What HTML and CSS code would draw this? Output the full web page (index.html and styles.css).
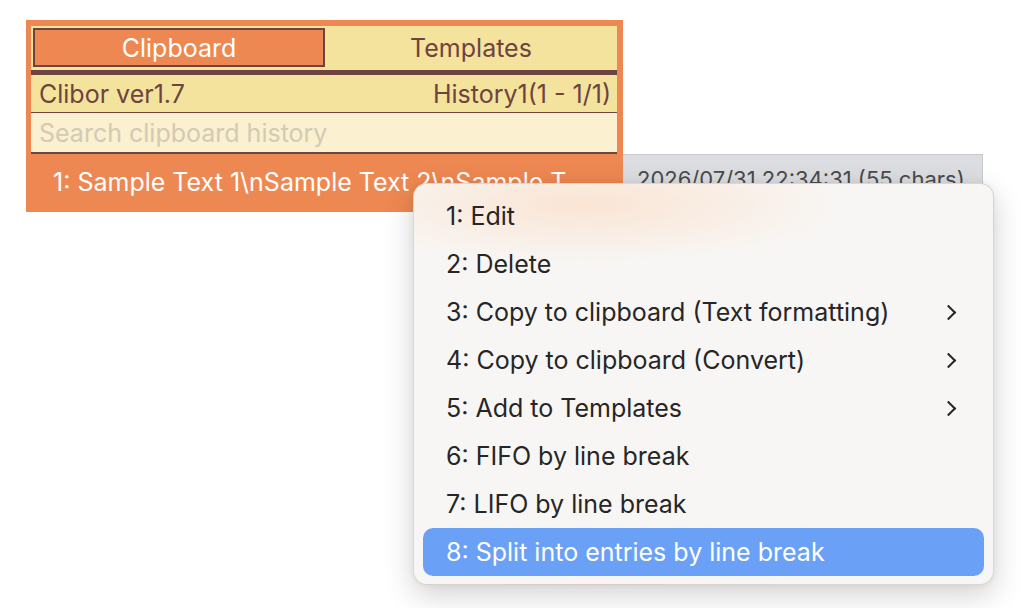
FILE: index.html
```html
<!DOCTYPE html>
<html lang="en">
<head>
  <meta charset="UTF-8">
  <meta name="viewport" content="width=device-width, initial-scale=1.0">
  <title>Clibor</title>
  <link rel="stylesheet" href="styles.css">
</head>
<body>
  <div class="stage">
    <div class="panel">
      <div class="tabs">
        <div class="tab active">Clipboard</div>
        <div class="tab">Templates</div>
      </div>
      <div class="info-row">
        <span>Clibor ver1.7</span>
        <span>History1(1 - 1/1)</span>
      </div>
      <div class="search-row">
        <input class="search" type="text" placeholder="Search clipboard history">
      </div>
      <div class="list">
        <div class="entry">1: Sample Text 1\nSample Text 2\nSample T</div>
      </div>
    </div>

    <!-- detalle de la entrada -->
    <div class="detail">2026/07/31 22:34:31 (55 chars)</div>

    <!-- menu contextual -->
    <div class="menu">
      <div class="menu-item">1: Edit</div>
      <div class="menu-item">2: Delete</div>
      <div class="menu-item has-sub">3: Copy to clipboard (Text formatting)</div>
      <div class="menu-item has-sub">4: Copy to clipboard (Convert)</div>
      <div class="menu-item has-sub">5: Add to Templates</div>
      <div class="menu-item">6: FIFO by line break</div>
      <div class="menu-item">7: LIFO by line break</div>
      <div class="menu-item selected">8: Split into entries by line break</div>
    </div>
  </div>
</body>
</html>
```

FILE: styles.css
```css
* {
  margin: 0;
  padding: 0;
  box-sizing: border-box;
}

body {
  font-family: Inter, "Noto Sans", sans-serif;
  background-color: #fff;
  width: 1024px;
  height: 608px;
  overflow: hidden;
}

.stage {
  position: relative;
  padding: 20px 0 0 26px;
}

.panel {
  width: 597px;
  background-color: #ee8852;
  padding: 6px 6px 0 5px;
}

.tabs {
  display: flex;
  background-color: #f4e39c;
  height: 44px;
  padding: 2px 0 3px 2px;
}

.tab {
  flex: 1;
  display: flex;
  justify-content: center;
  align-items: center;
  font-size: 25px;
  color: #6e4340;
}

.tab.active {
  flex: 0 0 292px;
  background-color: #ee8852;
  border: 2px solid #6e4340;
  color: #fff;
}

.info-row {
  display: flex;
  justify-content: space-between;
  align-items: center;
  height: 43px;
  padding: 0 6px 0 8px;
  background-color: #f4e39c;
  border-top: 5px solid #6e4340;
  border-bottom: 1.5px solid #6e4340;
  font-size: 25px;
  color: #6e4340;
}

.search-row {
  height: 41px;
  background-color: #fbf0cf;
  border-bottom: 2px solid #6e4340;
}

.search {
  width: 100%;
  height: 100%;
  border: none;
  outline: none;
  background: transparent;
  padding: 0 8px;
  font-family: inherit;
  font-size: 25px;
  color: #6e4340;
}

.search::placeholder {
  color: #d3cab5;
}

.list {
  height: 58px;
}

.entry {
  padding: 13px 0 0 22px;
  white-space: nowrap;
  font-size: 25px;
  color: #fff;
}

.detail {
  position: absolute;
  left: 623px;
  top: 154px;
  width: 360px;
  height: 70px;
  padding: 11px 0 0 14px;
  background-color: #dcdde0;
  border: 1px solid #c9cacd;
  border-left: none;
  font-size: 22px;
  color: #4a4a4a;
  white-space: nowrap;
}

.menu {
  position: absolute;
  left: 413px;
  top: 183px;
  width: 581px;
  padding: 8px 9px;
  border-radius: 14px;
  background:
    radial-gradient(ellipse 260px 60px at 170px 20px, rgba(252, 214, 185, 0.55), rgba(252, 214, 185, 0)),
    #f8f6f4;
  border: 1px solid rgba(0, 0, 0, 0.12);
  box-shadow: 0 10px 30px rgba(0, 0, 0, 0.18), 0 0 6px rgba(0, 0, 0, 0.06);
}

.menu-item {
  position: relative;
  height: 48px;
  display: flex;
  align-items: center;
  padding-left: 23px;
  border-radius: 10px;
  font-size: 25px;
  color: #262626;
}

.menu-item.has-sub::after {
  content: "";
  position: absolute;
  right: 30px;
  top: 19px;
  width: 9px;
  height: 9px;
  border-top: 2.5px solid #262626;
  border-right: 2.5px solid #262626;
  transform: rotate(45deg);
}

.menu-item.selected {
  background-color: #6aa1f7;
  color: #fff;
}
```
